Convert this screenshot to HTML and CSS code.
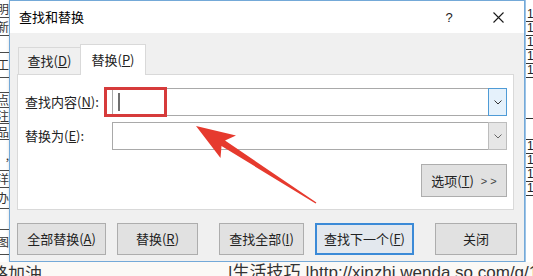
FILE: index.html
```html
<!DOCTYPE html>
<html lang="zh-CN">
<head>
    <meta charset="UTF-8">
    <title>查找和替换</title>
    <link rel="stylesheet" href="styles.css">
</head>
<body>

    <!-- Hoja de cálculo detrás del diálogo -->
    <div class="sheet-col sheet-left">
        <div class="cell h17">明</div>
        <div class="cell h17">新</div>
        <div class="cell h16"></div>
        <div class="cell h24">工</div>
        <div class="cell h14"></div>
        <div class="cell h14">点</div>
        <div class="cell h15">注</div>
        <div class="cell h15">品</div>
        <div class="cell h30">,</div>
        <div class="cell h16">洋</div>
        <div class="cell h20">办</div>
        <div class="cell h20"></div>
        <div class="cell h24">图</div>
    </div>

    <div class="dialog">
        <div class="titlebar">
            <span class="title">查找和替换</span>
            <span class="tb-help">?</span>
            <span class="tb-close">
                <svg width="11" height="11" viewBox="0 0 11 11"><path d="M0.5 0.5 L10.5 10.5 M10.5 0.5 L0.5 10.5" stroke="#1a1a1a" stroke-width="1.1" fill="none"/></svg>
            </span>
        </div>

        <div class="dialog-body">
            <div class="tabs">
                <div class="tab">查找(<u>D</u>)</div>
                <div class="tab tab-active">替换(<u>P</u>)</div>
            </div>

            <div class="panel">
                <div class="field-row">
                    <label class="field-label">查找内容(<u>N</u>):</label>
                    <div class="combo">
                        <div class="combo-text"><span class="caret"></span></div>
                        <div class="combo-btn combo-btn-focus">
                            <svg width="8" height="5" viewBox="0 0 8 5"><polyline points="0.5,0.5 4,4 7.5,0.5" stroke="#333" fill="none"/></svg>
                        </div>
                    </div>
                </div>
                <div class="field-row">
                    <label class="field-label">替换为(<u>E</u>):</label>
                    <div class="combo">
                        <div class="combo-text"></div>
                        <div class="combo-btn">
                            <svg width="8" height="5" viewBox="0 0 8 5"><polyline points="0.5,0.5 4,4 7.5,0.5" stroke="#666" fill="none"/></svg>
                        </div>
                    </div>
                </div>
                <div class="options-row">
                    <button class="btn btn-options">选项(<u>T</u>) <span class="chev">&gt; &gt;</span></button>
                </div>
            </div>

            <div class="actions">
                <button class="btn w89">全部替换(<u>A</u>)</button>
                <button class="btn w81">替换(<u>R</u>)</button>
                <button class="btn w85 spaced">查找全部(<u>I</u>)</button>
                <button class="btn w99 btn-default">查找下一个(<u>F</u>)</button>
                <button class="btn w82 spaced">关闭</button>
            </div>
        </div>
    </div>

    <div class="sheet-col sheet-right">
        <div class="num">1</div>
        <div class="num">1</div>
        <div class="num">1</div>
        <div class="num">1</div>
        <div class="num">1</div>
        <div class="num empty h40"></div>
        <div class="num empty h20"></div>
        <div class="num">1</div>
        <div class="num">1</div>
        <div class="num">1</div>
        <div class="num">1</div>
    </div>

    <div class="sheet-bottom">
        <span class="cell-a">路加油</span>
        <span class="cell-b">|生活技巧 |http://xinzhi.wenda.so.com/q/1</span>
    </div>

    <!-- Anotación: recuadro rojo y flecha -->
    <svg class="annot" width="533" height="276" viewBox="0 0 533 276">
        <rect x="105.5" y="88.5" width="60" height="27" fill="none" stroke="#d63b3b" stroke-width="3"/>
        <polygon fill="#e63a2e" points="196,126 236,135.5 225,140.5 316.4,202.4 315.6,203.6 221.5,146 220.5,158"/>
    </svg>

</body>
</html>
```

FILE: styles.css
```css
/* Página general */
body {
    margin: 0;
    width: 533px;
    height: 276px;
    overflow: hidden;
    background: #ffffff;
    font-family: "Noto Sans CJK SC", "Liberation Sans", sans-serif;
    font-size: 13px;
    color: #000;
    display: grid;
    grid-template-columns: 9px 516px 8px;
    grid-template-rows: 262px 14px;
    position: relative;
}

/* Columnas de la hoja detrás */
.sheet-col {
    display: flex;
    flex-direction: column;
    overflow: hidden;
    background: #fff;
}

.sheet-left .cell {
    display: flex;
    justify-content: flex-end;
    align-items: center;
    overflow: hidden;
    border-bottom: 1px solid #4a4a4a;
    font-size: 12px;
    line-height: 12px;
    color: #333;
}

.h14 { height: 14px; }
.h15 { height: 15px; }
.h16 { height: 16px; }
.h17 { height: 17px; }
.h20 { height: 20px; }
.h24 { height: 24px; }
.h30 { height: 30px; }
.h40 { height: 40px; }

.sheet-right {
    padding-top: 8px;
    border-left: 1px solid #9cc3e6;
}

.sheet-right .num {
    height: 13px;
    font-family: "Liberation Sans", sans-serif;
    font-size: 12px;
    line-height: 13px;
    color: #222;
    padding-left: 1px;
    border-bottom: 1px solid #333;
}

.sheet-right .num.h40 { height: 40px; }
.sheet-right .num.h20 { height: 20px; }

.sheet-bottom {
    grid-column: 1 / -1;
    display: flex;
    background: #fbf9f6;
    font-size: 17px;
    line-height: 20px;
    color: #333;
    white-space: nowrap;
    overflow: hidden;
}

.cell-a {
    width: 237px;
    margin-left: -9px;
    flex-shrink: 0;
    margin-top: 1px;
}

.cell-b {
    flex-shrink: 0;
    margin-top: 1px;
    font-family: "Liberation Sans", "Noto Sans CJK SC", sans-serif;
}

/* Diálogo */
.dialog {
    grid-column: 2;
    grid-row: 1;
    border: 1px solid #74a9d8;
    background: #f0f0f0;
    display: flex;
    flex-direction: column;
    box-shadow: 0 0 3px rgba(0, 0, 0, 0.15);
}

.titlebar {
    height: 32px;
    background: #fff;
    display: flex;
    align-items: center;
    padding: 0 3px 0 9px;
}

.title {
    flex: 1;
    font-size: 13px;
    line-height: 16px;
}

.tb-help {
    width: 30px;
    text-align: center;
    font-family: "Liberation Sans", sans-serif;
    font-size: 13px;
    color: #222;
}

.tb-close {
    width: 46px;
    margin-left: 11px;
    display: flex;
    justify-content: center;
    align-items: center;
}

.dialog-body {
    padding: 11px 7px 6px;
    display: flex;
    flex-direction: column;
}

/* Pestañas */
.tabs {
    display: flex;
    align-items: flex-end;
    height: 30px;
}

.tab {
    width: 61px;
    height: 26px;
    margin-left: 1px;
    border: 1px solid #d9d9d9;
    border-bottom: none;
    border-right: none;
    background: #f0f0f0;
    display: flex;
    align-items: center;
    justify-content: center;
    line-height: 16px;
    color: #222;
}

.tab-active {
    width: 64px;
    height: 29px;
    margin-left: 0;
    margin-bottom: -1px;
    padding-bottom: 1px;
    border-right: 1px solid #d9d9d9;
    background: #fff;
    position: relative;
    z-index: 1;
}

/* Panel blanco */
.panel {
    width: 482px;
    height: 121px;
    margin-right: 3px;
    border: 1px solid #d9d9d9;
    background: #fff;
    padding: 13px 6px 0 7px;
    display: flex;
    flex-direction: column;
}

.field-row {
    display: flex;
    align-items: center;
    height: 28px;
}

.field-row + .field-row {
    margin-top: 6px;
}

.field-label {
    width: 87px;
    line-height: 16px;
    color: #222;
}

.combo {
    flex: 1;
    height: 26px;
    border: 1px solid #a9a9a9;
    display: flex;
    background: #fff;
}

.combo-text {
    flex: 1;
    display: flex;
    align-items: center;
}

.caret {
    width: 2px;
    height: 18px;
    margin-left: 5px;
    background: #6f6f6f;
}

.combo-btn {
    width: 17px;
    margin: -1px -1px -1px 0;
    border: 1px solid #bdbdbd;
    background: #e6e6e6;
    display: flex;
    align-items: center;
    justify-content: center;
}

.combo-btn-focus {
    border-color: #4f9bd6;
    background: #e5f1fb;
}

.options-row {
    display: flex;
    justify-content: flex-end;
    margin-top: 14px;
}

/* Botones */
.btn {
    font-family: "Noto Sans CJK SC", "Liberation Sans", sans-serif;
    font-size: 13px;
    line-height: 16px;
    color: #222;
    height: 32px;
    padding: 0;
    border: 1px solid #adadad;
    background: #e1e1e1;
    display: flex;
    align-items: center;
    justify-content: center;
    flex-shrink: 0;
}

.btn-options {
    width: 86px;
    height: 33px;
}

.chev {
    margin-left: 7px;
    font-family: "Liberation Sans", sans-serif;
    font-size: 11px;
    color: #444;
}

.btn-default {
    border: 2px solid #3b8ad7;
    background: #e3e8ee;
}

.actions {
    display: flex;
    gap: 11px;
    margin-top: 13px;
}

.w89 { width: 89px; }
.w81 { width: 81px; }
.w85 { width: 85px; }
.w99 { width: 99px; }
.w82 { width: 82px; }

.spaced {
    margin-left: 10px;
}

/* Anotación encima */
.annot {
    position: absolute;
    top: 0;
    left: 0;
    pointer-events: none;
}
```
